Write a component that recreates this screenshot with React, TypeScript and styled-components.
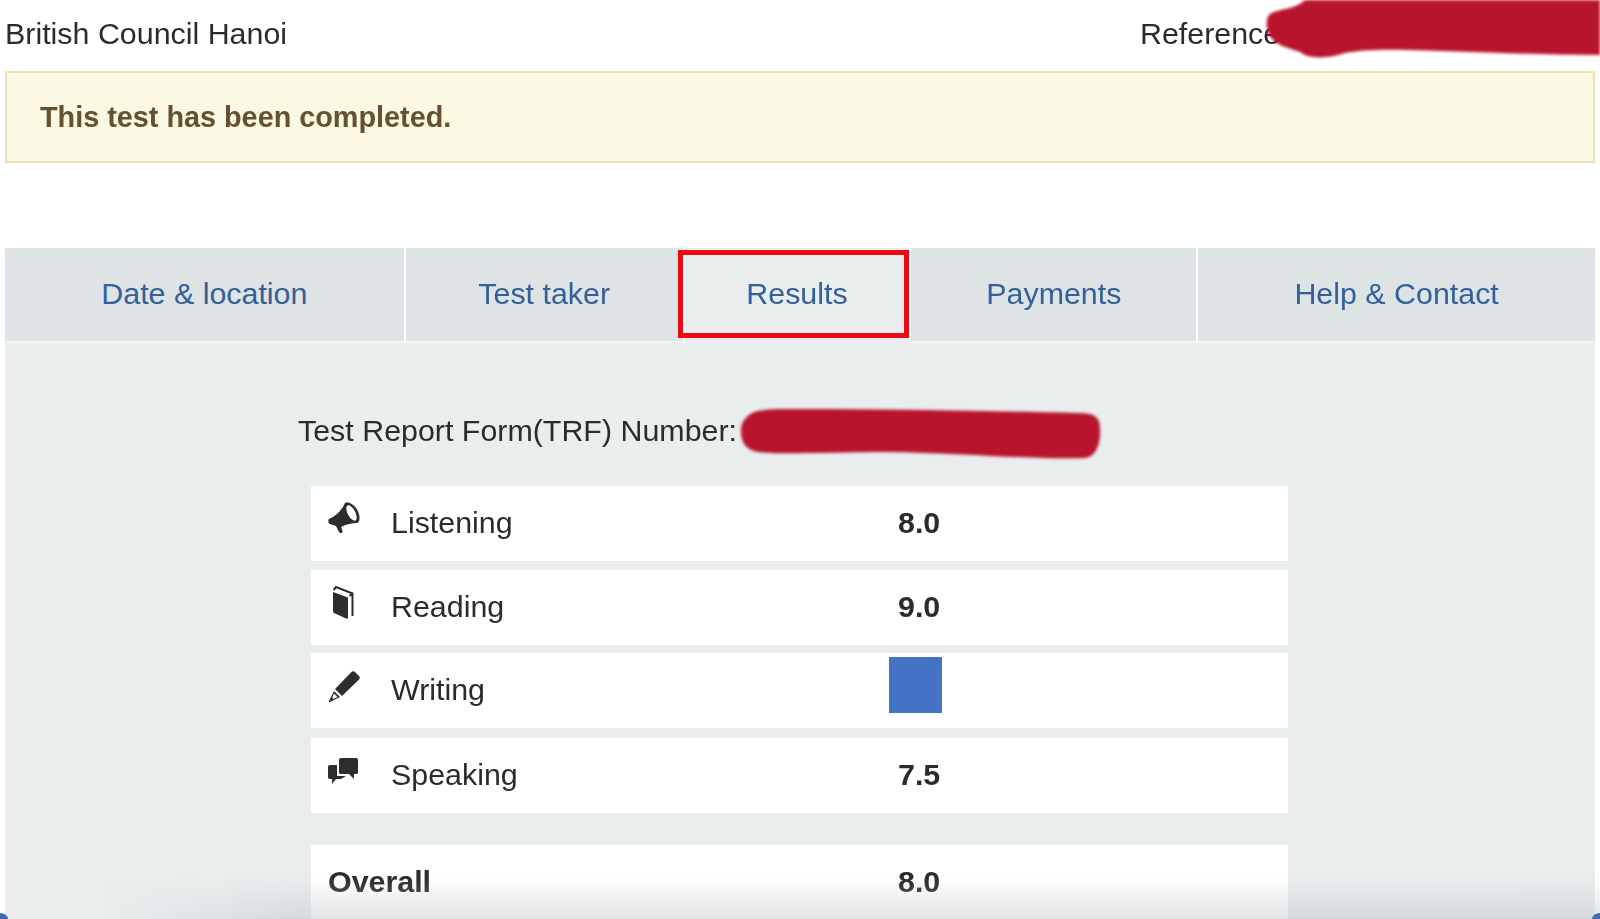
import React from 'react'
import styled, { createGlobalStyle } from 'styled-components'

const GlobalStyle = createGlobalStyle`
  html, body {
    margin: 0;
    padding: 0;
    height: 919px;
    overflow: hidden;
    background: #fff;
  }
  * {
    box-sizing: border-box;
  }
`

const Page = styled.div`
  position: relative;
  height: 919px;
  padding: 0 5px;
  overflow: hidden;
  font-family: 'Liberation Sans', Arial, sans-serif;
  font-size: 30.4px;
  color: #2b2b2b;
  filter: blur(0.4px);
`

const Header = styled.div`
  display: flex;
  justify-content: space-between;
  align-items: center;
  height: 71px;
  padding-bottom: 5px;
`

const Reference = styled.div`
  position: relative;
  width: 455px;
`

const Scribble = styled.svg<{ $top: number; $left: number }>`
  position: absolute;
  top: ${(p) => p.$top}px;
  left: ${(p) => p.$left}px;
  fill: #b9142d;
  filter: blur(1.5px);
`

const Alert = styled.div`
  display: flex;
  align-items: center;
  height: 92px;
  padding: 0 33px;
  background: #fbf8e4;
  border: 2px solid #f1dfb6;
  color: #66502f;
  font-size: 28.8px;
  font-weight: 700;
`

const Tabs = styled.div`
  display: flex;
  gap: 2px;
  margin-top: 85px;
  height: 95px;
`

const Tab = styled.div<{ $width: number; $active?: boolean }>`
  position: relative;
  display: flex;
  align-items: center;
  justify-content: center;
  width: ${(p) => p.$width}px;
  padding-bottom: 3px;
  background: ${(p) => (p.$active ? '#e9edee' : '#dee3e5')};
  border-bottom: 2px solid ${(p) => (p.$active ? '#e9edee' : '#f4f6f6')};
  color: #33609a;

  ${(p) =>
    p.$active &&
    `
    &::after {
      content: '';
      position: absolute;
      top: 2px;
      left: -7px;
      right: 0;
      bottom: 3px;
      border: 5px solid #ee0a12;
    }
  `}
`

const Panel = styled.div`
  height: 576px;
  padding: 63px 307px 0 293px;
  background: #e9edee;
`

const TrfLine = styled.div`
  position: relative;
  display: flex;
  align-items: center;
  height: 50px;
  padding-bottom: 2px;
`

const Scores = styled.div`
  margin: 30px 0 0 13px;
`

const Row = styled.div<{ $gap: number }>`
  display: grid;
  grid-template-columns: 63px 507px 1fr;
  align-items: center;
  height: 75px;
  margin-top: ${(p) => p.$gap}px;
  padding: 0 0 3px 17px;
  background: #fff;
`

const IconCell = styled.div`
  display: flex;
  align-items: center;
  margin: -4px 0 0 -6px;

  svg {
    display: block;
    width: 44px;
    height: 44px;
    fill: #2d2d2f;
  }
`

const Value = styled.div`
  font-weight: 700;
`

const BlueSquare = styled.div`
  width: 53px;
  height: 56px;
  margin: -9px 0 0 -9px;
  background: #4472c4;
`

const OverallRow = styled(Row)`
  height: 80px;
  padding-bottom: 8px;
`

const OverallLabel = styled.div`
  grid-column: 1 / 3;
  font-weight: 700;
`

const BottomShade = styled.div`
  position: absolute;
  left: 100px;
  right: 0;
  bottom: 0;
  height: 42px;
  background: linear-gradient(to bottom, rgba(190, 194, 197, 0), rgba(190, 194, 197, 0.45));
  mask-image: linear-gradient(to right, transparent, #000 200px);
  pointer-events: none;
`

const Corner = styled.div<{ $right?: boolean }>`
  position: absolute;
  bottom: 0;
  ${(p) => (p.$right ? 'right: 0;' : 'left: 0;')}
  width: 8px;
  height: 6px;
  background: #3f6cb4;
  border-radius: ${(p) => (p.$right ? '100% 0 0 0' : '0 100% 0 0')};
`

const BullhornIcon = () => (
  <svg viewBox="0 0 44 44">
    <path d="M23 5C20 12 14 18 7 21c-1 1-1 4 1 5l6 2 3 6c1 2 4 1 3.500-1L19 29c6-3 11-4 16-4 4-1 3-10-1-15C30 5 25 3 23 5z" />
    <ellipse cx="29.500" cy="15" rx="3.800" ry="8.500" transform="rotate(-28 29.500 15)" fill="#fff" />
  </svg>
)

const BookIcon = () => (
  <svg viewBox="0 0 44 44">
    <path d="M11 10l15 5.500v20c0 1-1 1.500-2 1L12 31c-1-.5-1-1-1-2z" />
    <path d="M11.500 8 14 5l16.500 6.500V34M27.500 14l3-2.500" fill="none" stroke="#2d2d2f" strokeWidth="2" />
  </svg>
)

const PencilIcon = () => (
  <svg viewBox="0 0 44 44">
    <path d="M29.500 7c1-1 2.500-1 3.500 0l4 4c1 1 1 2.500 0 3.500L20 31l-7-7z" />
    <path d="M12 26l6 6-10 5c-1 .5-1.500 0-1-1z" />
    <path d="M12 28.500 15.500 32 11 34 10.500 32z" fill="#fff" />
  </svg>
)

const CommentsIcon = () => (
  <svg viewBox="0 0 44 44">
    <path d="M19 8h15c1.500 0 2 1 2 2v12c0 1.500-.5 2-2 2h-2v5l-5-5h-8c-1.500 0-2-.5-2-2V10c0-1 .5-2 2-2z" />
    <path d="M8 15h7v11h9l-5 3h-5l-4 5v-5H8c-1.500 0-2-1-2-2V17c0-1 .5-2 2-2z" />
  </svg>
)

const scores = [
  { label: 'Listening', value: '8.0', icon: <BullhornIcon />, gap: 0 },
  { label: 'Reading', value: '9.0', icon: <BookIcon />, gap: 9 },
  { label: 'Writing', value: null, icon: <PencilIcon />, gap: 8 },
  { label: 'Speaking', value: '7.5', icon: <CommentsIcon />, gap: 10 },
]

const App = () => (
  <>
    <GlobalStyle />
    <Page>
      <Header>
        <div>British Council Hanoi</div>
        <Reference>
          Reference:
          <Scribble $top={-16} $left={120} width={340} height={65} viewBox="0 0 340 65">
            <path d="M10 14C20 8 35 10 45 0h295v55c-60 0-120-3-190-5-30-1-50 0-65 3-15 5-35 7-45-1-15-5-28-8-32-20-2-8-2-14 2-18z" />
          </Scribble>
        </Reference>
      </Header>
      <Alert>This test has been completed.</Alert>
      <Tabs>
        <Tab $width={399}>Date &amp; location</Tab>
        <Tab $width={277}>Test taker</Tab>
        <Tab $width={225} $active>
          Results
        </Tab>
        <Tab $width={285}>Payments</Tab>
        <Tab $width={397}>Help &amp; Contact</Tab>
      </Tabs>
      <Panel>
        <TrfLine>
          Test Report Form(TRF) Number:
          <Scribble $top={0} $left={440} width={366} height={56} viewBox="0 0 366 56">
            <path d="M8 12C15 3 30 3 60 3c90 0 190 2 280 4 15 0 22 3 22 15 1 16-4 30-17 30-45 2-125-5-195-6-60 0-110 3-130 0C8 44 3 36 3 26c0-6 1-10 5-14z" />
          </Scribble>
        </TrfLine>
        <Scores>
          {scores.map((s) => (
            <Row key={s.label} $gap={s.gap}>
              <IconCell>{s.icon}</IconCell>
              <div>{s.label}</div>
              {s.value ? <Value>{s.value}</Value> : <BlueSquare />}
            </Row>
          ))}
          <OverallRow $gap={32}>
            <OverallLabel>Overall</OverallLabel>
            <Value>8.0</Value>
          </OverallRow>
        </Scores>
      </Panel>
      <BottomShade />
      <Corner />
      <Corner $right />
    </Page>
  </>
)

export default App
